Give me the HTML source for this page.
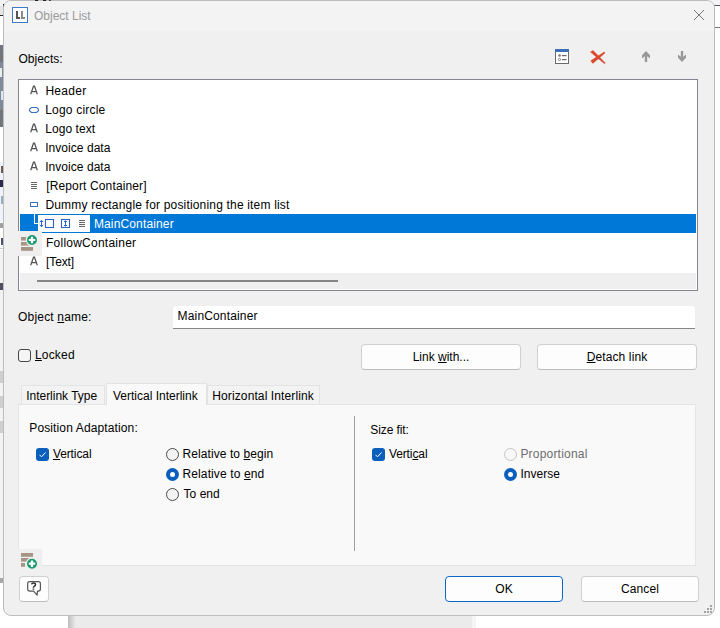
<!DOCTYPE html>
<html><head><meta charset="utf-8">
<style>
html,body{margin:0;padding:0;}
body{letter-spacing:0.22px;width:720px;height:628px;overflow:hidden;position:relative;background:#fff;font-family:"Liberation Sans",sans-serif;font-size:12px;color:#000;}
.a{position:absolute;}
.t{position:absolute;white-space:nowrap;line-height:15px;font-size:12px;letter-spacing:0.22px;margin-top:1px;}
.u{text-decoration:underline;text-underline-offset:1px;}
#dlg{position:absolute;left:3px;top:0px;width:710px;height:614px;border:1px solid #bdbdbd;border-radius:8px;background:#f0f0f0;overflow:hidden;}
.btn{position:absolute;box-sizing:border-box;height:26px;border:1px solid #d0d0d0;border-bottom-color:#bcbcbc;border-radius:4px;background:#fdfdfd;text-align:center;line-height:25px;}
.chk{position:absolute;box-sizing:border-box;width:13px;height:13px;border-radius:3px;}
.rad{position:absolute;box-sizing:border-box;width:13px;height:13px;border-radius:50%;}
.row{position:absolute;left:20px;width:676px;height:19px;}
</style></head><body>

<!-- background behind dialog -->
<div class="a" style="left:0;top:0;width:720px;height:6px;background:#f3f3f5"></div>
<div class="a" style="left:0;top:6px;width:4px;height:9px;background:#e6e6e6"></div>
<div class="a" style="left:3px;top:4px;width:1px;height:3px;background:#222"></div>
<div class="a" style="left:0;top:15px;width:4px;height:1px;background:#222"></div>
<div class="a" style="left:0;top:45px;width:4px;height:17px;background:#72767c"></div>
<div class="a" style="left:0;top:62px;width:4px;height:48px;background:#7e8a98"></div>
<div class="a" style="left:0;top:68px;width:2px;height:9px;background:#e8eef4"></div>
<div class="a" style="left:1px;top:91px;width:2px;height:9px;background:#dde6f0"></div>
<div class="a" style="left:0;top:110px;width:4px;height:17px;background:#72767c"></div>
<div class="a" style="left:0;top:162px;width:4px;height:60px;background:#eef3fb"></div>
<div class="a" style="left:1px;top:166px;width:2px;height:7px;background:#6a5a50"></div>
<div class="a" style="left:0;top:180px;width:3px;height:7px;background:#2a2a50"></div>
<div class="a" style="left:1px;top:196px;width:2px;height:8px;background:#9aa8c0"></div>
<div class="a" style="left:0;top:223px;width:4px;height:5px;background:#a0a0a0"></div>
<div class="a" style="left:1px;top:238px;width:3px;height:7px;background:#505070"></div>
<div class="a" style="left:0;top:248px;width:4px;height:1px;background:#c8c8c8"></div>
<div class="a" style="left:0;top:250px;width:4px;height:330px;background:#f2f2f2"></div>
<div class="a" style="left:0;top:283px;width:3px;height:7px;background:#505060"></div>
<div class="a" style="left:0;top:371px;width:4px;height:12px;background:#cfcfcf"></div>
<div class="a" style="left:0;top:396px;width:4px;height:12px;background:#cfcfcf"></div>
<div class="a" style="left:0;top:421px;width:4px;height:12px;background:#cfcfcf"></div>
<div class="a" style="left:0;top:578px;width:3px;height:5px;background:#a8a8a8"></div>
<div class="a" style="left:714px;top:5px;width:6px;height:1px;background:#555"></div>
<div class="a" style="left:714px;top:27px;width:6px;height:1px;background:#777"></div>
<div class="a" style="left:68px;top:616px;width:7px;height:12px;background:linear-gradient(90deg,#bdbdbd,#e6e6e6)"></div>
<div class="a" style="left:75px;top:616px;width:397px;height:12px;background:#ebebeb"></div>
<div class="a" style="left:472px;top:616px;width:4px;height:12px;background:#f5f5f5"></div>

<div id="dlg">
  <div class="a" style="left:0;top:0;width:710px;height:30px;background:#f3f3f3"></div>
</div>

<!-- title -->
<div class="a" style="left:35px;top:0;width:3px;height:1px;background:#222"></div>
<div class="a" style="left:43px;top:0;width:3px;height:1px;background:#222"></div>
<div class="a" style="left:49px;top:0;width:2px;height:1px;background:#444"></div>
<div class="a" style="left:12px;top:7px;width:14px;height:14px;border:1px solid #3d7cc2;background:#fff"></div>
<div class="a" style="left:16px;top:11px;width:2px;height:8px;background:#555"></div>
<div class="a" style="left:16px;top:17px;width:4px;height:2px;background:#555"></div>
<div class="a" style="left:21px;top:11px;width:2px;height:8px;background:#8a8a8a"></div>
<div class="a" style="left:21px;top:17px;width:4px;height:2px;background:#8a8a8a"></div>
<div class="t" style="left:34px;top:8px;color:#9a9a9a;letter-spacing:0">Object List</div>
<svg class="a" style="left:693px;top:9px" width="12" height="12" viewBox="0 0 12 12"><path d="M1 1L11 11M11 1L1 11" stroke="#777" stroke-width="1"/></svg>

<div class="t" style="left:18.50px;top:51px;letter-spacing:0.006px">Objects:</div>

<!-- toolbar icons -->
<svg class="a" style="left:555px;top:49px" width="15" height="15" viewBox="0 0 15 15">
  <rect x="0.5" y="0.5" width="13" height="14" fill="#fff" stroke="#6a6a6a"/>
  <rect x="0" y="0" width="14" height="3" fill="#3d6fb6"/>
  <circle cx="4.5" cy="6.5" r="1.3" fill="#777"/>
  <rect x="7" y="6" width="4.5" height="1.2" fill="#666"/>
  <circle cx="4.5" cy="10.5" r="1.1" fill="none" stroke="#777" stroke-width="0.9"/>
  <rect x="7" y="10" width="4.5" height="1.2" fill="#666"/>
</svg>
<svg class="a" style="left:586px;top:46px" width="24" height="22" viewBox="0 0 24 22">
  <path d="M4.5 6.1 L7.1 4.5 L19.3 17.1 L18.5 17.7 Z" fill="#d9482a" stroke="#d9482a" stroke-width="0.5" stroke-linejoin="round"/>
  <path d="M6.8 17.4 L4.8 14.8 L18.2 6.0 L19.0 7.0 Z" fill="#d9482a" stroke="#d9482a" stroke-width="0.5" stroke-linejoin="round"/>
</svg>
<svg class="a" style="left:641px;top:51px" width="10" height="11" viewBox="0 0 10 11">
  <path d="M5 0 L9 4.2 L9 7.6 L6.2 5.2 L6.2 11 L3.8 11 L3.8 5.2 L1 7.6 L1 4.2 Z" fill="#999"/>
</svg>
<svg class="a" style="left:677px;top:51px" width="10" height="11" viewBox="0 0 10 11">
  <path d="M5 11 L9 6.8 L9 3.4 L6.2 5.8 L6.2 0 L3.8 0 L3.8 5.8 L1 3.4 L1 6.8 Z" fill="#999"/>
</svg>

<!-- list box -->
<div class="a" style="left:18px;top:79px;width:678px;height:210px;border:1px solid #82868c;background:#fff"></div>
<div class="a" style="left:20px;top:273px;width:676px;height:16px;background:#efefef"></div>
<div class="a" style="left:37px;top:280px;width:301px;height:2px;background:#858585"></div>

<!-- rows -->
<svg class="a" style="left:30px;top:85px" width="8" height="11" viewBox="0 0 8 11"><path d="M0.7 9.2L3.5 1.2H4.5L7.3 9.2M1.9 6.6H6.1" fill="none" stroke="#555" stroke-width="1.25"/></svg>
<div class="t" style="left:45.40px;top:83px;letter-spacing:0.280px">Header</div>
<svg class="a" style="left:28px;top:106px" width="12" height="8" viewBox="0 0 12 8"><path d="M3.5 1.5H8.5L10.5 3.3V4.7L8.5 6.5H3.5L1.5 4.7V3.3Z" fill="none" stroke="#3d70b8" stroke-width="1.1"/></svg>
<div class="t" style="left:45.20px;top:102px;letter-spacing:0.200px">Logo circle</div>
<svg class="a" style="left:30px;top:123px" width="8" height="11" viewBox="0 0 8 11"><path d="M0.7 9.2L3.5 1.2H4.5L7.3 9.2M1.9 6.6H6.1" fill="none" stroke="#555" stroke-width="1.25"/></svg>
<div class="t" style="left:45.20px;top:121px;letter-spacing:0.070px">Logo text</div>
<svg class="a" style="left:30px;top:142px" width="8" height="11" viewBox="0 0 8 11"><path d="M0.7 9.2L3.5 1.2H4.5L7.3 9.2M1.9 6.6H6.1" fill="none" stroke="#555" stroke-width="1.25"/></svg>
<div class="t" style="left:45.20px;top:140px;letter-spacing:0.047px">Invoice data</div>
<svg class="a" style="left:30px;top:161px" width="8" height="11" viewBox="0 0 8 11"><path d="M0.7 9.2L3.5 1.2H4.5L7.3 9.2M1.9 6.6H6.1" fill="none" stroke="#555" stroke-width="1.25"/></svg>
<div class="t" style="left:45.20px;top:159px;letter-spacing:0.047px">Invoice data</div>
<svg class="a" style="left:30px;top:181px" width="8" height="9" viewBox="0 0 8 9"><path d="M1 1.5H7M1 3.5H7M1 5.5H7M1 7.5H7" stroke="#666" stroke-width="1"/></svg>
<div class="t" style="left:46.20px;top:178px;letter-spacing:0.138px">[Report Container]</div>
<svg class="a" style="left:30px;top:202px" width="8" height="5" viewBox="0 0 8 5"><rect x="0.5" y="0.5" width="7" height="4" fill="none" stroke="#3d70b8"/></svg>
<div class="t" style="left:45.40px;top:197px;letter-spacing:0.179px">Dummy rectangle for positioning the item list</div>

<!-- selected row -->
<div class="a" style="left:20px;top:214px;width:676px;height:19px;background:#0078d7"></div>
<div class="a" style="left:34px;top:214px;width:1px;height:10px;background:#fff"></div>
<div class="a" style="left:34px;top:223px;width:4px;height:1px;background:#fff"></div>
<div class="a" style="left:38px;top:215px;width:52px;height:17px;background:#fff"></div>
<svg class="a" style="left:38px;top:215px" width="52" height="17" viewBox="0 0 52 17">
  <path d="M3.5 5.5V11.5" stroke="#2e62c4" stroke-width="1"/>
  <path d="M1.8 7.2L3.5 5.2L5.2 7.2M1.8 9.8L3.5 11.8L5.2 9.8" stroke="#2e62c4" stroke-width="1" fill="none"/>
  <rect x="7.5" y="4.5" width="8" height="8" fill="none" stroke="#2e62c4" stroke-width="1.1"/>
  <rect x="23.5" y="4.5" width="8" height="8" fill="none" stroke="#2e62c4" stroke-width="1.1"/>
  <path d="M27.5 5.5V11.5M26 6.5H29M26 10.5H29" stroke="#2e62c4" stroke-width="1"/>
  <path d="M41 5.5H47M41 7.5H47M41 9.5H47M41 11.5H47" stroke="#666" stroke-width="1"/>
</svg>
<div class="t" style="left:93.90px;top:216px;color:#fff;letter-spacing:0.145px">MainContainer</div>

<div class="t" style="left:46px;top:235px;letter-spacing:0.241px">FollowContainer</div>
<svg class="a" style="left:30px;top:256px" width="8" height="11" viewBox="0 0 8 11"><path d="M0.7 9.2L3.5 1.2H4.5L7.3 9.2M1.9 6.6H6.1" fill="none" stroke="#555" stroke-width="1.25"/></svg>
<div class="t" style="left:46px;top:254px;letter-spacing:-0.100px">[Text]</div>

<!-- floating add panel 1 -->
<div class="a" style="left:18px;top:231px;width:24px;height:25px;background:#efefef"></div>
<svg class="a" style="left:18px;top:231px" width="24" height="25" viewBox="0 0 24 25">
  <rect x="3" y="6" width="8" height="3.6" fill="#a69584"/>
  <rect x="3" y="11" width="9" height="3.6" fill="#a69584"/>
  <rect x="3" y="16" width="12" height="3.8" fill="#a69584"/>
  <circle cx="14" cy="9" r="5.6" fill="#1a9b6e" stroke="#efefef" stroke-width="1.2"/>
  <path d="M14 5.8V12.2M10.8 9H17.2" stroke="#fff" stroke-width="2.2"/>
</svg>

<!-- object name -->
<div class="t" style="left:18.10px;top:309px;letter-spacing:0.175px">Object <span class="u">n</span>ame:</div>
<div class="a" style="left:173px;top:306px;width:522px;height:22px;background:#fff;border-bottom:1px solid #868686;border-radius:3px 3px 0 0"></div>
<div class="t" style="left:177.60px;top:308px;letter-spacing:0.153px">MainContainer</div>

<!-- locked -->
<div class="chk" style="left:18px;top:349px;border:1px solid #474747;background:#f5f5f5"></div>
<div class="t" style="left:35.00px;top:347px;letter-spacing:0.170px"><span class="u">L</span>ocked</div>

<div class="btn" style="left:361px;top:344px;width:160px;letter-spacing:0.002px"><span class="u" style="text-decoration:none">Link </span><span class="u">w</span>ith...</div>
<div class="btn" style="left:537px;top:344px;width:160px;letter-spacing:0.120px"><span class="u">D</span>etach link</div>

<!-- tabs -->
<div class="a" style="left:21px;top:385px;width:84px;height:20px;box-sizing:border-box;border:1px solid #e3e3e3;border-bottom:none;background:#f3f3f3"></div>
<div class="a" style="left:207px;top:385px;width:113px;height:20px;box-sizing:border-box;border:1px solid #e3e3e3;border-bottom:none;background:#f3f3f3"></div>
<div class="a" style="left:18px;top:404px;width:678px;height:162px;box-sizing:border-box;border:1px solid #e5e5e5;background:#f9f9f9"></div>
<div class="a" style="left:106px;top:383px;width:101px;height:22px;box-sizing:border-box;border:1px solid #e3e3e3;border-bottom:none;background:#f9f9f9"></div>
<div class="t" style="left:26.20px;top:388px;letter-spacing:-0.018px">Interlink Type</div>
<div class="t" style="left:113.00px;top:388px;letter-spacing:-0.004px">Vertical Interlink</div>
<div class="t" style="left:212.30px;top:388px;letter-spacing:0.109px">Horizontal Interlink</div>

<!-- panel content -->
<div class="t" style="left:29.25px;top:420px;letter-spacing:0.128px">Position Adaptation:</div>
<div class="chk" style="left:36px;top:448px;background:#0a5fbd"></div>
<svg class="a" style="left:36px;top:448px" width="13" height="13" viewBox="0 0 13 13"><path d="M3.5 6.8L5.5 8.8L9.5 4.5" stroke="#fff" stroke-width="1" fill="none"/></svg>
<div class="t" style="left:52.90px;top:446px;letter-spacing:-0.100px"><span class="u">V</span>ertical</div>

<div class="rad" style="left:166px;top:448px;border:1px solid #4a4a4a;background:#f3f3f3"></div>
<div class="t" style="left:182.50px;top:446px;letter-spacing:0.083px">Relative to <span class="u">b</span>egin</div>
<div class="rad" style="left:166px;top:468px;background:#0a5fbd"></div>
<div class="a" style="left:170px;top:472px;width:5px;height:5px;border-radius:50%;background:#fff"></div>
<div class="t" style="left:182.50px;top:466px;letter-spacing:0.113px">Relative to <span class="u">e</span>nd</div>
<div class="rad" style="left:166px;top:488px;border:1px solid #4a4a4a;background:#f3f3f3"></div>
<div class="t" style="left:183.50px;top:486px;letter-spacing:0.040px">To end</div>

<div class="a" style="left:354px;top:416px;width:1px;height:135px;background:#a0a0a0"></div>

<div class="t" style="left:370.30px;top:422px;letter-spacing:-0.100px">Size fit:</div>
<div class="chk" style="left:372px;top:448px;background:#0a5fbd"></div>
<svg class="a" style="left:372px;top:448px" width="13" height="13" viewBox="0 0 13 13"><path d="M3.5 6.8L5.5 8.8L9.5 4.5" stroke="#fff" stroke-width="1" fill="none"/></svg>
<div class="t" style="left:388.90px;top:446px;letter-spacing:-0.100px">Verti<span class="u">c</span>al</div>

<div class="rad" style="left:504px;top:448px;border:1px solid #c5c5c5;background:#f7f7f7"></div>
<div class="t" style="left:520.40px;top:446px;color:#6d6d6d;letter-spacing:0.202px">Proportional</div>
<div class="rad" style="left:504px;top:468px;background:#0a5fbd"></div>
<div class="a" style="left:508px;top:472px;width:5px;height:5px;border-radius:50%;background:#fff"></div>
<div class="t" style="left:520.40px;top:466px;letter-spacing:0.037px">Inverse</div>

<!-- floating add panel 2 -->
<div class="a" style="left:18px;top:549px;width:24px;height:17px;background:#efefef"></div>
<svg class="a" style="left:18px;top:549px" width="26" height="22" viewBox="0 0 26 22">
  <rect x="3" y="4" width="12" height="3.8" fill="#a69584"/>
  <rect x="3" y="9" width="8" height="3.6" fill="#a69584"/>
  <rect x="3" y="14" width="4" height="3.8" fill="#a69584"/>
  <circle cx="14" cy="14.7" r="5.6" fill="#1a9b6e" stroke="#efefef" stroke-width="1.2"/>
  <path d="M14 11.5V17.9M10.8 14.7H17.2" stroke="#fff" stroke-width="2.2"/>
</svg>

<!-- help button -->
<div class="btn" style="left:19px;top:576px;width:30px;height:26px"></div>
<svg class="a" style="left:22px;top:576px" width="24" height="24" viewBox="0 0 24 24">
  <path d="M7.7 5.6H16.4Q18.4 5.6 18.4 7.6V13.1Q18.4 15.1 16.4 15.1H15.5L15.1 19.2L11.6 15.1H7.7Q5.7 15.1 5.7 13.1V7.6Q5.7 5.6 7.7 5.6Z" fill="#fff" stroke="#555" stroke-width="1.2" stroke-linejoin="round"/>
  <path d="M9.6 8.3Q9.8 6.9 11.6 6.9Q13.5 6.9 13.5 8.6Q13.5 9.7 12.2 10.4Q11.4 10.9 11.4 11.7" fill="none" stroke="#333" stroke-width="1.5"/>
  <rect x="10.6" y="12.5" width="1.7" height="1.2" fill="#333"/>
</svg>

<div class="btn" style="left:445px;top:576px;width:118px;border:1.3px solid #0a67c8;line-height:25px;letter-spacing:0px">OK</div>
<div class="btn" style="left:581px;top:576px;width:118px;letter-spacing:0.120px">Cancel</div>

<!-- grip -->
<svg class="a" style="left:703px;top:604px" width="10" height="10" viewBox="0 0 10 10" fill="#a4a4a4">
  <rect x="7" y="1" width="2" height="2"/><rect x="4" y="4" width="2" height="2"/><rect x="7" y="4" width="2" height="2"/>
  <rect x="1" y="7" width="2" height="2"/><rect x="4" y="7" width="2" height="2"/><rect x="7" y="7" width="2" height="2"/>
</svg>

</body></html>
